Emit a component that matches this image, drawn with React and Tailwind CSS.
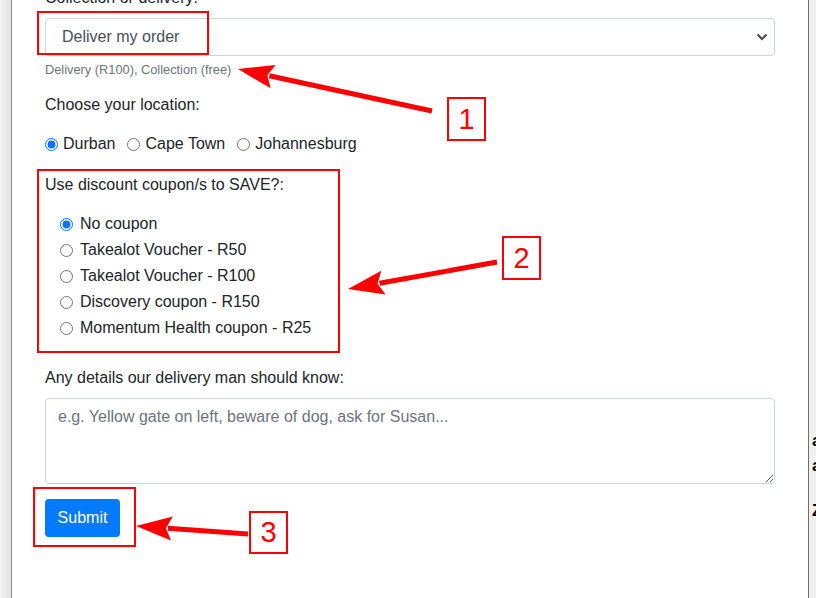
import React from "react";

const locations = ["Durban", "Cape Town", "Johannesburg"];
const coupons = [
  "No coupon",
  "Takealot Voucher - R50",
  "Takealot Voucher - R100",
  "Discovery coupon - R150",
  "Momentum Health coupon - R25",
];

// red annotation arrow: shaft + triangular head
const Arrow = ({ from, to, head = 36, half = 12, width = 5 }) => {
  const [x1, y1] = from;
  const [x2, y2] = to;
  const len = Math.hypot(x2 - x1, y2 - y1);
  const ux = (x2 - x1) / len;
  const uy = (y2 - y1) / len;
  const bx = x2 - ux * head;
  const by = y2 - uy * head;
  const px = -uy;
  const py = ux;
  const pts = `${x2},${y2} ${bx + px * half},${by + py * half} ${bx + ux * 6},${by + uy * 6} ${bx - px * half},${by - py * half}`;
  return (
    <g fill="#ff0000" stroke="none">
      <line x1={x1} y1={y1} x2={bx + ux * 4} y2={by + uy * 4} stroke="#ff0000" strokeWidth={width} />
      <polygon points={pts} />
    </g>
  );
};

const NumberTag = ({ n, className }) => (
  <div className={`absolute flex items-center justify-center border-2 border-[#ff0000] bg-white text-[29px] leading-none text-[#ff0000] ${className}`}>
    {n}
  </div>
);

export default function App() {
  return (
    <div className="relative flex h-[598px] w-[816px] overflow-hidden bg-white font-['Liberation_Sans',Arial,sans-serif] text-[16px] text-[#212529]">
      <div className="w-[12px] shrink-0 border-r border-[#8c8c8c] bg-linear-to-r from-[#f4f4f4] to-[#e2e2e2]" />

      <div className="flex-1 px-[33px]">
        <div className="mt-[-14px] leading-6">Collection or delivery:</div>
        <div className="mt-2 flex h-[38px] items-center justify-between rounded border border-[#ced4da] bg-white pl-[16px] pr-[6px] text-[#495057]">
          <span className="leading-6">Deliver my order</span>
          <svg width="12" height="8" viewBox="0 0 12 8">
            <path d="M1.5 1.5 L6 6 L10.5 1.5" fill="none" stroke="#4a4f55" strokeWidth="2.2" />
          </svg>
        </div>
        <div className="mt-1 text-[12.8px] leading-[19.2px] text-[#6c757d]">Delivery (R100), Collection (free)</div>

        <div className="mt-[14px] leading-6">Choose your location:</div>
        <div className="mt-[15px] flex h-6 items-center">
          {locations.map((l, i) => (
            <label key={l} className="mr-[12px] flex items-center">
              <input type="radio" name="loc" defaultChecked={i === 0} className="m-0 mr-[5px] h-[13px] w-[13px]" />
              <span className="leading-6">{l}</span>
            </label>
          ))}
        </div>

        <div className="mt-[17px] leading-6">Use discount coupon/s to SAVE?:</div>
        <div className="mt-[14px] pl-[15px]">
          {coupons.map((c, i) => (
            <label key={c} className="flex h-[26px] items-center">
              <input type="radio" name="coupon" defaultChecked={i === 0} className="m-0 mr-[7px] h-[13px] w-[13px]" />
              <span className="leading-6">{c}</span>
            </label>
          ))}
        </div>

        <div className="mt-[25px] leading-6">Any details our delivery man should know:</div>
        <textarea
          className="mt-2 block h-[86px] w-full rounded border border-[#ced4da] px-3 py-[6px] leading-6 placeholder:text-[#6c757d]"
          placeholder="e.g. Yellow gate on left, beware of dog, ask for Susan..."
        />
        <button className="mt-[15px] h-[38px] w-[75px] rounded bg-[#007bff] text-white leading-6">Submit</button>
      </div>

      <div className="flex w-[8px] shrink-0 flex-col border-l border-[#6e6e6e] bg-[#f0f0f0] pl-[3px] text-[17px] font-bold leading-none text-black">
        <span className="mt-[432px]">a</span>
        <span className="mt-[8px]">a</span>
        <span className="mt-[28px]">Z</span>
      </div>

      <svg className="pointer-events-none absolute inset-0" width="816" height="598" viewBox="0 0 816 598">
        <g fill="none" stroke="#ff0000" strokeWidth="2">
          <rect x="38" y="12" width="170" height="42" />
          <rect x="38" y="170" width="301" height="182" />
          <rect x="34" y="488" width="101" height="58" />
        </g>
        <Arrow from={[432, 111]} to={[238, 69]} />
        <Arrow from={[497, 262]} to={[348, 289]} />
        <Arrow from={[248, 534]} to={[136, 526]} />
      </svg>

      <NumberTag n="1" className="left-[447px] top-[97px] h-[44px] w-[39px]" />
      <NumberTag n="2" className="left-[502px] top-[236px] h-[44px] w-[39px]" />
      <NumberTag n="3" className="left-[249px] top-[511px] h-[43px] w-[39px]" />
    </div>
  );
}
